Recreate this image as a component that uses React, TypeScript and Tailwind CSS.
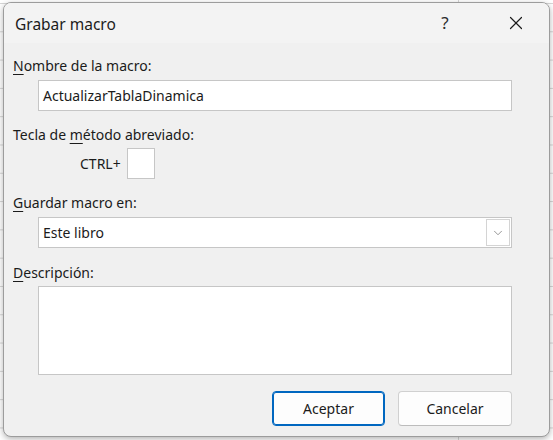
import { X, ChevronDown } from "lucide-react"

const font = "font-['Segoe_UI','Noto_Sans','Open_Sans',sans-serif]"

function Label({ mnemonic, rest, pre }: { mnemonic: string; rest: string; pre?: string }) {
  return (
    <div className="h-[20px] leading-[20px] text-[14px] text-[#1b1b1b]">
      {pre}
      <span className="underline underline-offset-[3px] decoration-1">{mnemonic}</span>
      {rest}
    </div>
  )
}

export default function App() {
  return (
    <div
      className={`w-[553px] h-[440px] overflow-hidden bg-white pt-[2px] pl-[3px] ${font} [background-image:linear-gradient(to_right,#d6d6d6_1px,transparent_1px),linear-gradient(to_bottom,#d6d6d6_1px,transparent_1px)] [background-size:109px_28.3px] [background-position:22px_3px]`}
    >
      <div className="w-[547px] h-[435px] rounded-[8px] border border-[#9c9c9c] bg-[#f0f0f0] shadow-[0_2px_6px_rgba(0,0,0,0.3)] flex flex-col overflow-hidden">
        {/* barra de titulo */}
        <div className="h-[40px] shrink-0 bg-[#f3f3f3] flex items-center pl-[11px] text-[#1b1b1b]">
          <span className="text-[15.5px] leading-[20px] mt-[1px]">Grabar macro</span>
          <div className="ml-auto flex items-center mr-[20px]">
            <span className="w-[20px] text-center text-[17px] leading-[20px] text-[#2b2b2b]">?</span>
            <div className="w-[26px] flex justify-center ml-[48px]">
              <X size={22} strokeWidth={1.3} className="text-[#1b1b1b]" />
            </div>
          </div>
        </div>

        {/* contenido */}
        <div className="flex-1 flex flex-col pl-[9px] pr-[37px] pt-[13px]">
          <Label mnemonic="N" rest="ombre de la macro:" />
          <div className="mt-[4px] ml-[25px] h-[31px] bg-white border border-[#c6c6c6] flex items-center pl-[4px] text-[14px] text-[#1b1b1b]">
            ActualizarTablaDinamica
          </div>

          <div className="mt-[14px]">
            <Label pre="Tecla de " mnemonic="m" rest="étodo abreviado:" />
          </div>
          <div className="mt-[3px] flex items-center">
            <span className="ml-[67px] w-[38px] text-[14px] text-[#1b1b1b]">CTRL+</span>
            <div className="ml-[9px] w-[28px] h-[31px] bg-white border border-[#c6c6c6]" />
          </div>

          <div className="mt-[14px]">
            <Label mnemonic="G" rest="uardar macro en:" />
          </div>
          <div className="mt-[4px] ml-[25px] h-[31px] bg-white border border-[#c6c6c6] flex items-center pl-[4px] pr-[1px] text-[14px] text-[#1b1b1b]">
            <span>Este libro</span>
            <div className="ml-auto w-[24px] h-[27px] border border-[#d4d4d4] flex items-center justify-center">
              <ChevronDown size={14} strokeWidth={1.2} className="text-[#6b6b6b]" />
            </div>
          </div>

          <div className="mt-[15px]">
            <Label mnemonic="D" rest="escripción:" />
          </div>
          <div className="mt-[3px] ml-[25px] h-[89px] bg-white border border-[#c6c6c6]" />

          <div className="mt-[16px] flex justify-end gap-[13px]">
            <button className="w-[113px] h-[35px] rounded-[4px] bg-[#fdfdfd] border border-[#0067c0] shadow-[inset_0_0_0_1px_#0067c0] text-[14px] text-[#1b1b1b]">
              Aceptar
            </button>
            <button className="w-[114px] h-[35px] rounded-[4px] bg-[#fdfdfd] border border-[#d0d0d0] border-b-[#bcbcbc] text-[14px] text-[#1b1b1b]">
              Cancelar
            </button>
          </div>
        </div>
      </div>
    </div>
  )
}
